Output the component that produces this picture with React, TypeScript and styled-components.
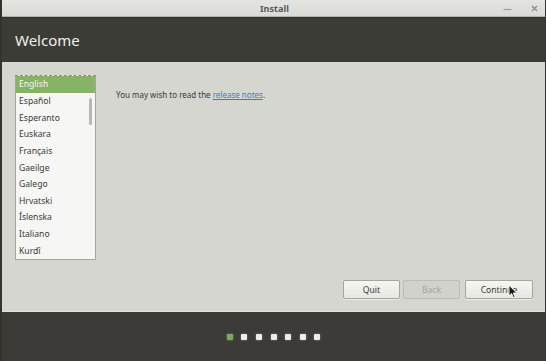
import React from "react";
import styled, { createGlobalStyle } from "styled-components";

const Global = createGlobalStyle`
  html, body { margin: 0; padding: 0; background: #3c3c37; }
  body { font-family: "Noto Sans", "DejaVu Sans", sans-serif; }
  #root { width: 546px; height: 361px; overflow: hidden; }
`;

const Window = styled.div`
  position: relative;
  width: 546px;
  height: 361px;
  display: flex;
  flex-direction: column;
  box-sizing: border-box;
  border-left: 2px solid #34342f;
  border-right: 1px solid #34342f;
`;

const TitleBar = styled.div`
  height: 16px;
  flex: none;
  background: linear-gradient(#e4e4e0, #dadad6);
  border-bottom: 1px solid #b4b4ae;
  display: flex;
  align-items: center;
  justify-content: center;
  position: relative;
`;

const Title = styled.span`
  font-size: 9px;
  font-weight: bold;
  color: #5a5a56;
  letter-spacing: 0.1px;
  margin-left: 2px;
`;

const TitleButtons = styled.div`
  position: absolute;
  right: 7px;
  top: 0;
  height: 16px;
  display: flex;
  align-items: center;
  gap: 19px;
`;

const Header = styled.div`
  height: 44px;
  flex: none;
  background: #3c3c37;
  display: flex;
  align-items: center;
  padding-left: 13px;
  border-top: 1px solid #2e2e2a;
`;

const HeaderTitle = styled.h1`
  margin: 0;
  font-size: 15px;
  font-weight: normal;
  color: #eeeeec;
  margin-top: -1px;
`;

const Body = styled.div`
  flex: 1;
  background: #d6d6d1;
  display: flex;
  flex-direction: column;
  padding: 13px 12px 12px 13px;
  box-sizing: border-box;
`;

const Content = styled.div`
  flex: 1;
  display: flex;
  gap: 20px;
  align-items: flex-start;
`;

const ListBox = styled.div`
  position: relative;
  width: 81px;
  height: 185px;
  box-sizing: border-box;
  background: #f6f6f4;
  border: 1px solid #a4a4a0;
  border-top: 1px dashed #8a8a86;
  overflow: hidden;
`;

const Item = styled.div<{ $selected?: boolean }>`
  height: 16.65px;
  display: flex;
  align-items: center;
  padding-left: 3px;
  font-size: 8.6px;
  color: ${(p) => (p.$selected ? "#f4f8ef" : "#3a3a38")};
  background: ${(p) => (p.$selected ? "#87b366" : "transparent")};
`;

const ScrollThumb = styled.div`
  position: absolute;
  right: 3px;
  top: 22px;
  width: 3px;
  height: 27px;
  border-radius: 2px;
  background: #b8b8b4;
`;

const Notes = styled.p`
  margin: 14px 0 0 0;
  font-size: 8px;
  color: #3a3a38;
`;

const Link = styled.a`
  color: #3d7cc9;
  text-decoration: underline;
`;

const ButtonRow = styled.div`
  display: flex;
  justify-content: flex-end;
  gap: 3px;
`;

const Button = styled.button<{ $w: number; $disabled?: boolean; $gapBefore?: number }>`
  width: ${(p) => p.$w}px;
  height: 19px;
  margin: 0 0 0 ${(p) => p.$gapBefore ?? 0}px;
  padding: 0;
  font-family: inherit;
  font-size: 8.6px;
  color: ${(p) => (p.$disabled ? "#a4a4a0" : "#3a3a38")};
  background: ${(p) =>
    p.$disabled ? "#d2d2cd" : "linear-gradient(#f6f6f3, #e6e6e2)"};
  border: 1px solid ${(p) => (p.$disabled ? "#bdbdb8" : "#a6a6a1")};
  border-radius: 2px;
  box-shadow: ${(p) => (p.$disabled ? "none" : "0 1px 0 rgba(255,255,255,0.5)")};
`;

const Footer = styled.div`
  height: 50px;
  flex: none;
  background: #3c3b37;
  border-top: 1px solid #e2e2de;
  display: flex;
  align-items: center;
  justify-content: center;
  gap: 8.6px;
  padding-top: 1px;
  box-sizing: border-box;
`;

const Dot = styled.span<{ $active?: boolean }>`
  width: 6px;
  height: 6px;
  border-radius: 1px;
  background: ${(p) => (p.$active ? "#7aa85c" : "#ecece8")};
  box-shadow: 0 0 2px ${(p) => (p.$active ? "rgba(140,200,110,0.8)" : "rgba(255,255,255,0.45)")};
`;

const Cursor = styled.svg`
  position: absolute;
  left: 506px;
  top: 284px;
  pointer-events: none;
`;

const languages = [
  "English",
  "Español",
  "Esperanto",
  "Euskara",
  "Français",
  "Gaeilge",
  "Galego",
  "Hrvatski",
  "Íslenska",
  "Italiano",
  "Kurdî",
];

export default function App() {
  return (
    <>
      <Global />
      <Window>
        <TitleBar>
          <Title>Install</Title>
          <TitleButtons>
            <svg width="9" height="8" viewBox="0 0 9 8">
              <path d="M0.5 5.5 H8.5" stroke="#9a9a96" strokeWidth="1.2" />
            </svg>
            <svg width="7" height="7" viewBox="0 0 7 7">
              <path d="M1 1 L6 6 M6 1 L1 6" stroke="#8c8c88" strokeWidth="1.3" />
            </svg>
          </TitleButtons>
        </TitleBar>
        <Header>
          <HeaderTitle>Welcome</HeaderTitle>
        </Header>
        <Body>
          <Content>
            <ListBox>
              {languages.map((l, i) => (
                <Item key={l} $selected={i === 0}>
                  {l}
                </Item>
              ))}
              <ScrollThumb />
            </ListBox>
            <Notes>
              You may wish to read the <Link href="#">release notes</Link>.
            </Notes>
          </Content>
          <ButtonRow>
            <Button $w={57}>Quit</Button>
            <Button $w={57} $disabled>
              Back
            </Button>
            <Button $w={68} $gapBefore={2}>
              Continue
            </Button>
          </ButtonRow>
        </Body>
        <Footer>
          {Array.from({ length: 7 }).map((_, i) => (
            <Dot key={i} $active={i === 0} />
          ))}
        </Footer>
        <Cursor width="10" height="16" viewBox="0 0 10 16">
          <path
            d="M1 1 L1 12 L3.6 9.6 L5.4 13.8 L7 13.1 L5.3 9 L8.6 9 Z"
            fill="#1a1a1a"
            stroke="#ffffff"
            strokeWidth="0.9"
            strokeLinejoin="round"
          />
        </Cursor>
      </Window>
    </>
  );
}
